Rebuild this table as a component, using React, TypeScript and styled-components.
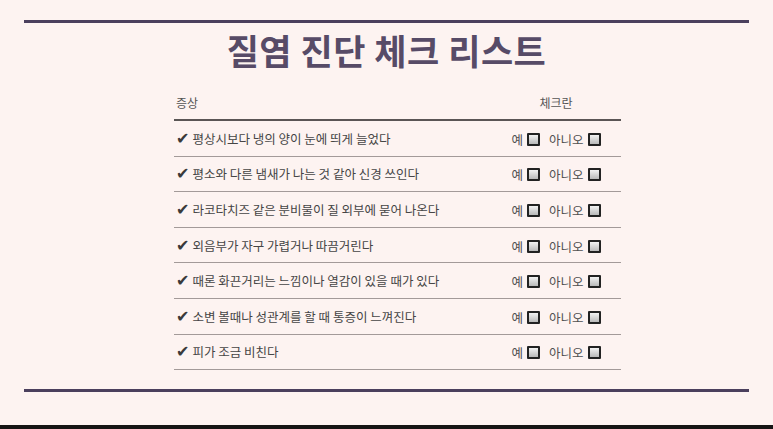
import React from 'react';
import styled, { createGlobalStyle } from 'styled-components';

const GlobalStyle = createGlobalStyle`
  html, body {
    margin: 0;
    padding: 0;
    background: #161414;
  }
  body {
    font-family: "Noto Sans CJK KR", "Noto Sans", sans-serif;
  }
`;

const Page = styled.div`
  height: 425px;
  background-color: #fdf3f1;
  padding: 20px 24px 0;
  box-sizing: border-box;
  display: flex;
  flex-direction: column;
`;

const Rule = styled.hr`
  margin: 0;
  border: none;
  height: 3px;
  background-color: #4b3f5d;
`;

const Title = styled.h1`
  margin: 0;
  height: 54px;
  line-height: 54px;
  text-align: center;
  font-size: 35px;
  font-weight: 700;
  color: #574b67;
  letter-spacing: 0.5px;
`;

const Table = styled.table`
  width: 447px;
  margin: 8px 0 19px 150px;
  border-collapse: collapse;
  font-size: 12.5px;
  color: #454545;
`;

const HeaderCell = styled.th<{ $center?: boolean }>`
  height: 34px;
  width: ${({ $center }) => ($center ? '98px' : 'auto')};
  padding: ${({ $center }) => ($center ? '0 16px 0 2px' : '0 2px')};
  font-weight: 400;
  font-size: 12px;
  color: #555;
  text-align: ${({ $center }) => ($center ? 'center' : 'left')};
  border-bottom: 2px solid #5a5555;
`;

const Row = styled.tr`
  border-bottom: 1px solid #a39a99;
`;

const Cell = styled.td<{ $center?: boolean }>`
  height: 34.6px;
  padding: ${({ $center }) => ($center ? '0 16px 0 2px' : '0 2px')};
  text-align: ${({ $center }) => ($center ? 'center' : 'left')};
  white-space: nowrap;
`;

const Check = styled.span`
  font-family: "DejaVu Sans", sans-serif;
  font-size: 16px;
  line-height: 1;
  color: #3a3a3a;
  margin-right: 3px;
`;

const Choice = styled.label`
  display: inline-flex;
  align-items: center;
  gap: 4px;
  margin: 0 4.5px;
  color: #505050;
  vertical-align: middle;
`;

const Box = styled.input`
  appearance: none;
  margin: 0;
  width: 13px;
  height: 13px;
  box-sizing: border-box;
  border: 2px solid #222;
  border-radius: 1px;
  background: linear-gradient(#f2f2f2, #b9b9b9);
`;

const symptoms = [
  '평상시보다 냉의 양이 눈에 띄게 늘었다',
  '평소와 다른 냄새가 나는 것 같아 신경 쓰인다',
  '라코타치즈 같은 분비물이 질 외부에 묻어 나온다',
  '외음부가 자구 가렵거나 따끔거린다',
  '때론 화끈거리는 느낌이나 열감이 있을 때가 있다',
  '소변 볼때나 성관계를 할 때 통증이 느껴진다',
  '피가 조금 비친다',
];

export default function App() {
  return (
    <>
      <GlobalStyle />
      <Page>
        <Rule />
        <Title>질염 진단 체크 리스트</Title>
        <Table>
          <thead>
            <tr>
              <HeaderCell>증상</HeaderCell>
              <HeaderCell $center>체크란</HeaderCell>
            </tr>
          </thead>
          <tbody>
            {symptoms.map((s, i) => (
              <Row key={i}>
                <Cell>
                  <Check>✔</Check>
                  {s}
                </Cell>
                <Cell $center>
                  <Choice>
                    예 <Box type="checkbox" />
                  </Choice>
                  <Choice>
                    아니오 <Box type="checkbox" />
                  </Choice>
                </Cell>
              </Row>
            ))}
          </tbody>
        </Table>
        <Rule />
      </Page>
    </>
  );
}
